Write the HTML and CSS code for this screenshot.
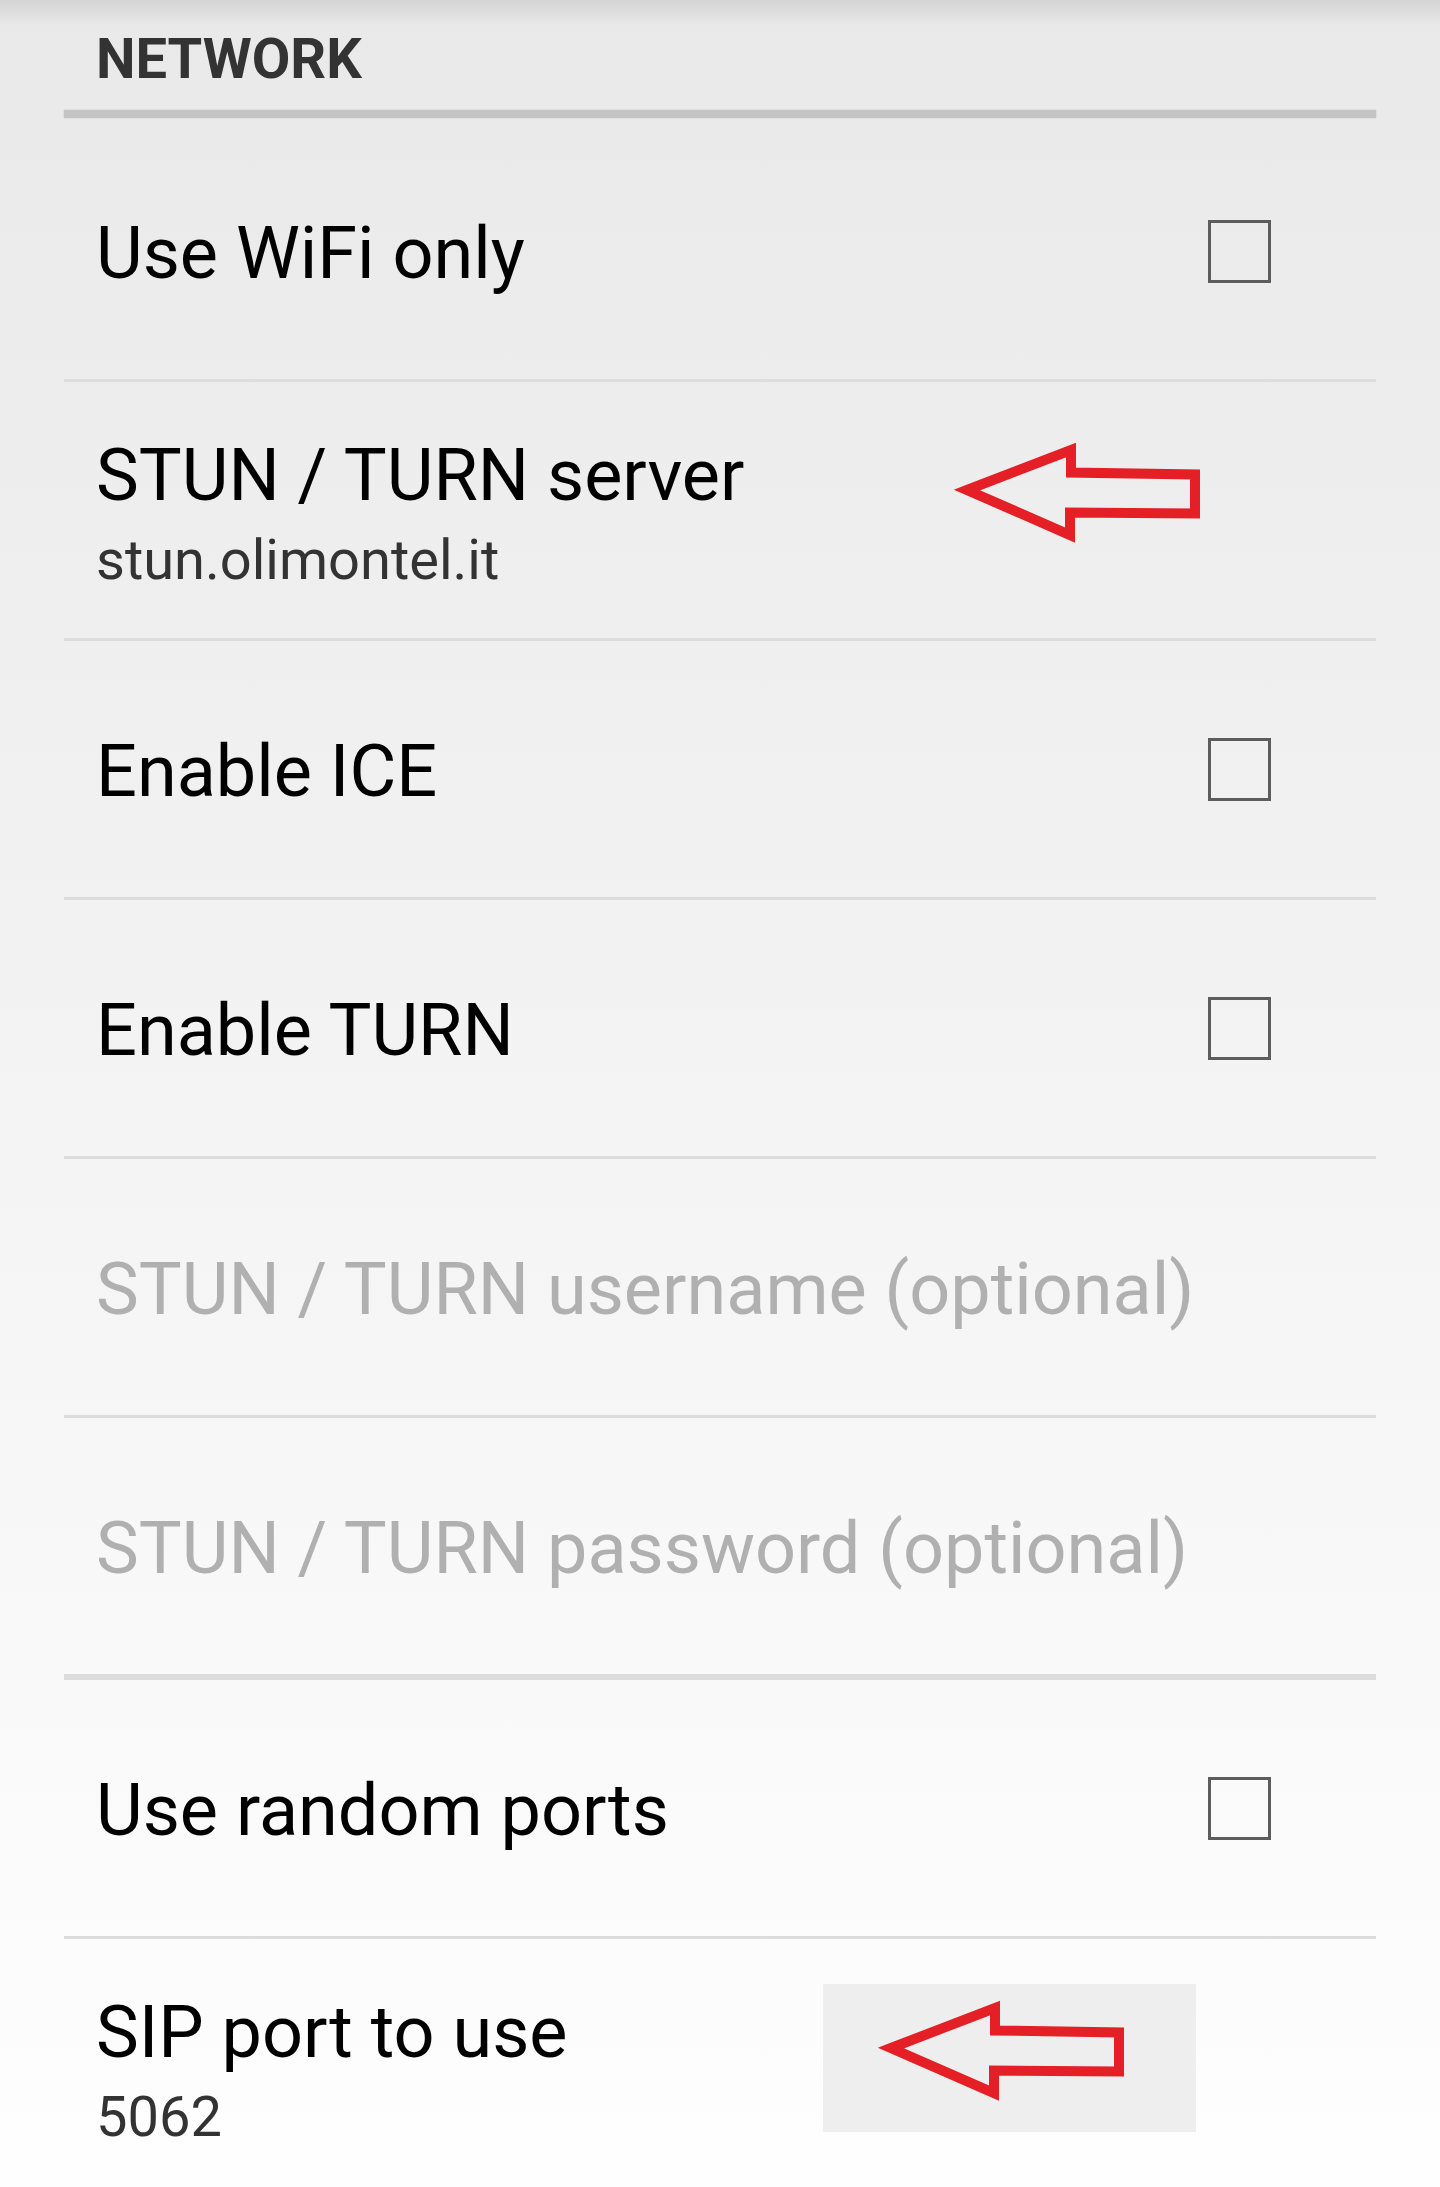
FILE: index.html
```html
<!DOCTYPE html>
<html lang="en">
<head>
    <meta charset="UTF-8">
    <meta name="viewport" content="width=device-width, initial-scale=1.0">
    <title>Network settings</title>
    <link rel="stylesheet" href="styles.css">
</head>
<body>
    <div class="screen">
        <div class="category">
            <h2 class="category-title">NETWORK</h2>
            <div class="category-rule"></div>
        </div>
        <ul class="pref-list">
            <li class="pref">
                <div class="pref-text">
                    <span class="pref-title">Use WiFi only</span>
                </div>
                <span class="checkbox"></span>
            </li>
            <li class="pref two-line">
                <div class="pref-text">
                    <span class="pref-title">STUN / TURN server</span>
                    <span class="pref-summary">stun.olimontel.it</span>
                </div>
                <svg class="arrow arrow-server" viewBox="0 0 254 106">
                    <path d="M17,50 L121,10 L121,32.5 L245,34.5 L245,73.5 L120,72.5 L120,95 Z"/>
                </svg>
            </li>
            <li class="pref">
                <div class="pref-text">
                    <span class="pref-title">Enable ICE</span>
                </div>
                <span class="checkbox"></span>
            </li>
            <li class="pref">
                <div class="pref-text">
                    <span class="pref-title">Enable TURN</span>
                </div>
                <span class="checkbox"></span>
            </li>
            <li class="pref disabled">
                <div class="pref-text">
                    <span class="pref-title">STUN / TURN username (optional)</span>
                </div>
            </li>
            <li class="pref disabled group-end">
                <div class="pref-text">
                    <span class="pref-title">STUN / TURN password (optional)</span>
                </div>
            </li>
            <li class="pref">
                <div class="pref-text">
                    <span class="pref-title">Use random ports</span>
                </div>
                <span class="checkbox"></span>
            </li>
            <li class="pref two-line">
                <div class="pref-text">
                    <span class="pref-title">SIP port to use</span>
                    <span class="pref-summary">5062</span>
                </div>
                <div class="arrow-box">
                    <svg class="arrow" viewBox="0 0 254 106">
                        <path d="M17,50 L121,10 L121,32.5 L245,34.5 L245,73.5 L120,72.5 L120,95 Z"/>
                    </svg>
                </div>
            </li>
        </ul>
    </div>
</body>
</html>
```

FILE: styles.css
```css
body {
    margin: 0;
    padding: 0;
    font-family: Roboto, "Liberation Sans", sans-serif;
}
.screen {
    position: relative;
    height: 2187px;
    overflow: hidden;
    background: linear-gradient(#e9e9e9, #fefefe);
}
/* soft shadow under the action bar */
.screen:before {
    content: "";
    position: absolute;
    top: 0;
    left: 0;
    right: 0;
    height: 26px;
    background: linear-gradient(rgba(0, 0, 0, 0.09), rgba(0, 0, 0, 0));
}
.category {
    margin: 0 64px;
    padding-top: 31px;
    height: 123px;
    box-sizing: border-box;
}
.category-title {
    margin: 0;
    padding-left: 32px;
    font-size: 56px;
    line-height: 56px;
    font-weight: 700;
    color: #333;
}
.category-rule {
    margin-top: 23px;
    height: 8px;
    background-color: #c4c4c4;
    box-shadow: 0 0 2px #c4c4c4;
}
.pref-list {
    list-style-type: none;
    margin: 0 64px;
    padding: 0;
}
.pref {
    position: relative;
    display: flex;
    align-items: center;
    height: 256px;
    border-bottom: 3px solid #dcdcdc;
}
.pref.group-end {
    border-bottom-width: 6px;
}
.pref:last-child {
    border-bottom: none;
}
.pref-text {
    flex: 1;
    display: flex;
    flex-direction: column;
    padding: 5px 0 0 32px;
}
.pref.two-line .pref-text {
    padding-top: 11px;
}
.pref-title {
    font-size: 72px;
    line-height: 72px;
    color: #000;
}
.pref-summary {
    margin-top: 16px;
    font-size: 56px;
    line-height: 64px;
    color: #333;
}
.pref.disabled .pref-title {
    color: #b0b0b0;
}
.checkbox {
    flex-shrink: 0;
    width: 57px;
    height: 57px;
    margin-right: 105px;
    border: 3px solid #5c5c5c;
}
.arrow {
    position: absolute;
    width: 254px;
    height: 106px;
}
.arrow path {
    fill: none;
    stroke: #e41f26;
    stroke-width: 10;
    stroke-linejoin: miter;
}
.arrow-server {
    left: 886px;
    top: 58px;
}
.arrow-box {
    position: absolute;
    left: 759px;
    top: 45px;
    width: 373px;
    height: 148px;
    background-color: #eeeeee;
}
.arrow-box .arrow {
    left: 51px;
    top: 14px;
}
```
